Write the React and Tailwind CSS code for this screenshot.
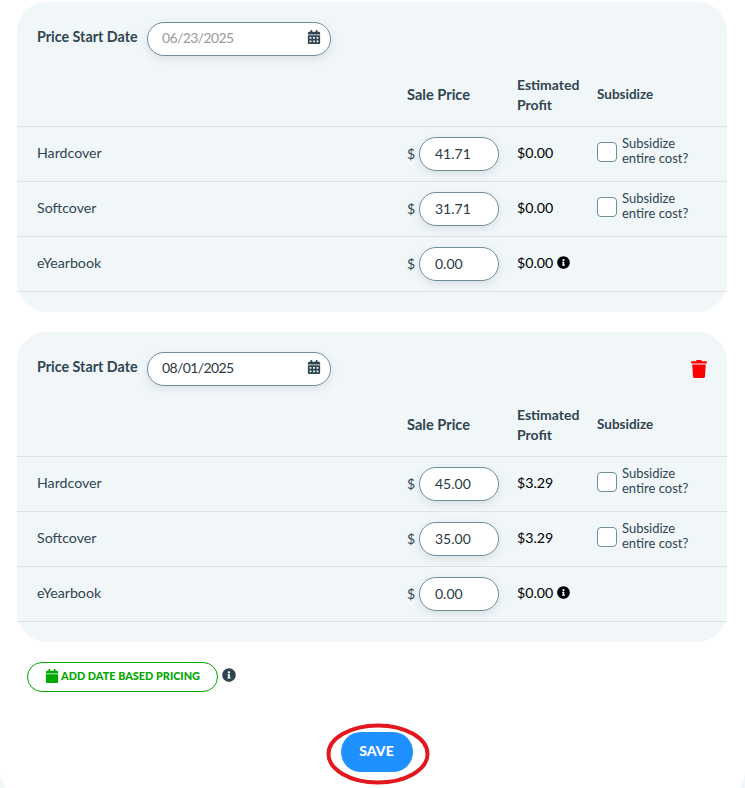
import React from 'react';
import { FaCalendar, FaCalendarAlt, FaInfoCircle, FaTrash } from 'react-icons/fa';

const PANELS = [
  {
    date: '06/23/2025',
    muted: true,
    rows: [
      { name: 'Hardcover', price: '41.71', profit: '$0.00', subsidize: true },
      { name: 'Softcover', price: '31.71', profit: '$0.00', subsidize: true },
      { name: 'eYearbook', price: '0.00', profit: '$0.00', info: true },
    ],
  },
  {
    date: '08/01/2025',
    removable: true,
    rows: [
      { name: 'Hardcover', price: '45.00', profit: '$3.29', subsidize: true },
      { name: 'Softcover', price: '35.00', profit: '$3.29', subsidize: true },
      { name: 'eYearbook', price: '0.00', profit: '$0.00', info: true },
    ],
  },
];

const PriceRow = ({ row }) => {
  return (
    <div className="grid grid-cols-[370px_110px_80px_1fr] items-center h-[55px] pl-5 border-b border-[#dde1e3]">
      <div className="mb-[2px] text-[14.2px] text-[#2f4550]">{row.name}</div>
      <div className="flex items-center">
        <span className="mb-[2px] w-3 text-[14px] text-[#2f4550]">$</span>
        <div className="w-20 h-[34px] flex items-center pl-[15px] pb-[2px] bg-white border border-[#6f8f98] rounded-[17px] shadow-[0_3px_8px_rgba(47,69,80,0.12)] text-[14px] text-[#2b3a42]">
          {row.price}
        </div>
      </div>
      <div className="flex items-center mb-[2px] text-[14.2px] text-black">
        {row.profit}
        {row.info && <FaInfoCircle className="ml-1 text-[13px]" />}
      </div>
      {row.subsidize && (
        <div className="flex items-center mb-1">
          <div className="w-5 h-5 bg-white border border-[#6f8f98] rounded-[4px]"></div>
          <div className="ml-[5px] mb-[2px] text-[13px] leading-[15px] text-[#2f4550]">
            Subsidize<br />entire cost?
          </div>
        </div>
      )}
    </div>
  );
};

const PricePanel = ({ panel }) => {
  return (
    <section className="ml-[17px] mr-[18px] h-[310px] bg-[#f1f6f9] rounded-[30px] pt-5">
      <div className="flex items-start pl-5 pr-[19px]">
        <div className="w-[110px] pt-[5px] text-[14.3px] leading-5 font-bold text-[#2f4550]">Price Start Date</div>
        <div className="w-[184px] h-[34px] flex items-center justify-between pl-[14px] pr-[9px] pb-1 bg-white border border-[#6f8f98] rounded-[17px] shadow-[0_3px_8px_rgba(47,69,80,0.12)]">
          <span className={panel.muted ? 'text-[14px] tracking-[-0.6px] text-[#9a9a9a]' : 'text-[14px] tracking-[-0.6px] text-[#2b3a42]'}>{panel.date}</span>
          <FaCalendarAlt className="text-[14px] text-[#2f4550]" />
        </div>
        {panel.removable && <FaTrash className="ml-auto mt-2 text-[18px] text-[#ff0000]" />}
      </div>
      <div className="grid grid-cols-[370px_110px_80px_1fr] items-center h-[71px] pl-5 pt-[7px] border-b border-[#dde1e3] text-[14px] leading-5 font-bold text-[#2f4550]">
        <div></div>
        <div className="text-[14.6px]">Sale Price</div>
        <div>Estimated<br />Profit</div>
        <div className="mb-[2px] text-[13.5px]">Subsidize</div>
      </div>
      {panel.rows.map((row) => (
        <PriceRow key={row.name} row={row} />
      ))}
    </section>
  );
};

const App = () => {
  return (
    <div className="h-[788px] overflow-hidden bg-[#f1f6f9] font-['Lato',sans-serif]">
      <div className="h-[800px] bg-white rounded-b-[30px] pt-[2px]">
        <div className="flex flex-col gap-5">
          {PANELS.map((panel) => (
            <PricePanel key={panel.date} panel={panel} />
          ))}
        </div>
        <div className="flex items-start mt-5 ml-[27px]">
          <button className="w-[191px] h-[30px] flex items-center justify-center gap-[2px] pb-[2px] bg-white border border-[#00a800] rounded-[15px] text-[10.9px] font-black text-[#00a800]">
            <FaCalendar className="text-[14px]" />
            ADD DATE BASED PRICING
          </button>
          <FaInfoCircle className="ml-1 mt-[6px] text-[14px] text-[#2f4550]" />
        </div>
        <div className="flex justify-center mt-[40px] ml-2">
          <div className="relative">
            <button className="block w-[72px] h-10 pb-1 bg-[#1e90ff] rounded-[20px] text-[14px] font-black text-white">SAVE</button>
            <svg className="absolute left-[-15px] top-[-9px] w-[104px] h-[62px]" viewBox="0 0 104 62" fill="none">
              <ellipse cx="52" cy="31" rx="49.5" ry="28.5" stroke="#e3171d" strokeWidth="4" />
            </svg>
          </div>
        </div>
      </div>
    </div>
  );
};

export default App;
